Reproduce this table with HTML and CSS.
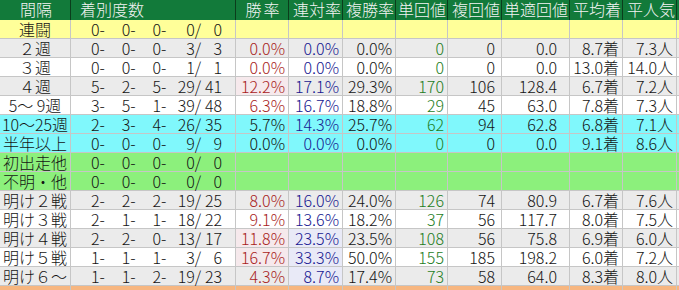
FILE: index.html
```html
<!DOCTYPE html>
<html lang="ja">
<head>
<meta charset="utf-8">
<title>間隔別成績</title>
<link rel="stylesheet" href="styles.css">
</head>
<body>
<div class="sheet">
  <div class="row head">
    <div class="cell name hl">間隔</div>
    <div class="cell rec hl">着別度数</div>
    <div class="cell win hc">勝率</div>
    <div class="cell hr">連対率</div>
    <div class="cell hr">複勝率</div>
    <div class="cell hr">単回値</div>
    <div class="cell hr">複回値</div>
    <div class="cell hr">単適回値</div>
    <div class="cell hr">平均着</div>
    <div class="cell hr">平人気</div>
    <div class="cell extra"></div>
  </div>

  <div class="row y">
    <div class="cell name">連闘</div>
    <div class="cell rec"><span>0-</span><span>0-</span><span>0-</span><span>0/</span><span>0</span></div>
    <div class="cell"></div><div class="cell"></div><div class="cell"></div><div class="cell"></div><div class="cell"></div><div class="cell"></div><div class="cell"></div><div class="cell"></div><div class="cell extra"></div>
  </div>

  <div class="row g">
    <div class="cell name">２週</div>
    <div class="cell rec"><span>0-</span><span>0-</span><span>0-</span><span>3/</span><span>3</span></div>
    <div class="cell num red">0.0%</div><div class="cell num blue">0.0%</div><div class="cell num">0.0%</div><div class="cell num green">0</div><div class="cell num p6">0</div><div class="cell num p12">0.0</div><div class="cell num">8.7着</div><div class="cell num">7.3人</div><div class="cell extra"></div>
  </div>

  <div class="row w">
    <div class="cell name">３週</div>
    <div class="cell rec"><span>0-</span><span>0-</span><span>0-</span><span>1/</span><span>1</span></div>
    <div class="cell num red">0.0%</div><div class="cell num blue">0.0%</div><div class="cell num">0.0%</div><div class="cell num green">0</div><div class="cell num p6">0</div><div class="cell num p12">0.0</div><div class="cell num">13.0着</div><div class="cell num">14.0人</div><div class="cell extra"></div>
  </div>

  <div class="row g">
    <div class="cell name">４週</div>
    <div class="cell rec"><span>5-</span><span>2-</span><span>5-</span><span>29/</span><span>41</span></div>
    <div class="cell num red hot">12.2%</div><div class="cell num blue">17.1%</div><div class="cell num">29.3%</div><div class="cell num green">170</div><div class="cell num p6">106</div><div class="cell num p12">128.4</div><div class="cell num">6.7着</div><div class="cell num">7.2人</div><div class="cell extra"></div>
  </div>

  <div class="row w">
    <div class="cell name">5～&nbsp;9週</div>
    <div class="cell rec"><span>3-</span><span>5-</span><span>1-</span><span>39/</span><span>48</span></div>
    <div class="cell num red">6.3%</div><div class="cell num blue">16.7%</div><div class="cell num">18.8%</div><div class="cell num green">29</div><div class="cell num p6">45</div><div class="cell num p12">63.0</div><div class="cell num">7.8着</div><div class="cell num">7.3人</div><div class="cell extra"></div>
  </div>

  <div class="row c">
    <div class="cell name">10～25週</div>
    <div class="cell rec"><span>2-</span><span>3-</span><span>4-</span><span>26/</span><span>35</span></div>
    <div class="cell num">5.7%</div><div class="cell num blue">14.3%</div><div class="cell num">25.7%</div><div class="cell num green">62</div><div class="cell num p6">94</div><div class="cell num p12">62.8</div><div class="cell num">6.8着</div><div class="cell num">7.1人</div><div class="cell extra"></div>
  </div>

  <div class="row c">
    <div class="cell name">半年以上</div>
    <div class="cell rec"><span>0-</span><span>0-</span><span>0-</span><span>9/</span><span>9</span></div>
    <div class="cell num">0.0%</div><div class="cell num blue">0.0%</div><div class="cell num">0.0%</div><div class="cell num green">0</div><div class="cell num p6">0</div><div class="cell num p12">0.0</div><div class="cell num">9.1着</div><div class="cell num">8.6人</div><div class="cell extra"></div>
  </div>

  <div class="row l">
    <div class="cell name">初出走他</div>
    <div class="cell rec"><span>0-</span><span>0-</span><span>0-</span><span>0/</span><span>0</span></div>
    <div class="cell"></div><div class="cell"></div><div class="cell"></div><div class="cell"></div><div class="cell"></div><div class="cell"></div><div class="cell"></div><div class="cell"></div><div class="cell extra"></div>
  </div>

  <div class="row l">
    <div class="cell name">不明・他</div>
    <div class="cell rec"><span>0-</span><span>0-</span><span>0-</span><span>0/</span><span>0</span></div>
    <div class="cell"></div><div class="cell"></div><div class="cell"></div><div class="cell"></div><div class="cell"></div><div class="cell"></div><div class="cell"></div><div class="cell"></div><div class="cell extra"></div>
  </div>

  <div class="row g">
    <div class="cell name">明け２戦</div>
    <div class="cell rec"><span>2-</span><span>2-</span><span>2-</span><span>19/</span><span>25</span></div>
    <div class="cell num red">8.0%</div><div class="cell num blue">16.0%</div><div class="cell num">24.0%</div><div class="cell num green">126</div><div class="cell num p6">74</div><div class="cell num p12">80.9</div><div class="cell num">6.7着</div><div class="cell num">7.6人</div><div class="cell extra"></div>
  </div>

  <div class="row w">
    <div class="cell name">明け３戦</div>
    <div class="cell rec"><span>2-</span><span>1-</span><span>1-</span><span>18/</span><span>22</span></div>
    <div class="cell num red">9.1%</div><div class="cell num blue">13.6%</div><div class="cell num">18.2%</div><div class="cell num green">37</div><div class="cell num p6">56</div><div class="cell num p12">117.7</div><div class="cell num">8.0着</div><div class="cell num">7.5人</div><div class="cell extra"></div>
  </div>

  <div class="row g">
    <div class="cell name">明け４戦</div>
    <div class="cell rec"><span>2-</span><span>2-</span><span>0-</span><span>13/</span><span>17</span></div>
    <div class="cell num red hot">11.8%</div><div class="cell num blue cool">23.5%</div><div class="cell num">23.5%</div><div class="cell num green">108</div><div class="cell num p6">56</div><div class="cell num p12">75.8</div><div class="cell num">6.9着</div><div class="cell num">6.0人</div><div class="cell extra"></div>
  </div>

  <div class="row w">
    <div class="cell name">明け５戦</div>
    <div class="cell rec"><span>1-</span><span>1-</span><span>1-</span><span>3/</span><span>6</span></div>
    <div class="cell num red hot">16.7%</div><div class="cell num blue cool">33.3%</div><div class="cell num">50.0%</div><div class="cell num green">155</div><div class="cell num p6">185</div><div class="cell num p12">198.2</div><div class="cell num">6.0着</div><div class="cell num">7.2人</div><div class="cell extra"></div>
  </div>

  <div class="row g">
    <div class="cell name">明け６～</div>
    <div class="cell rec"><span>1-</span><span>1-</span><span>2-</span><span>19/</span><span>23</span></div>
    <div class="cell num red">4.3%</div><div class="cell num blue cool">8.7%</div><div class="cell num">17.4%</div><div class="cell num green">73</div><div class="cell num p6">58</div><div class="cell num p12">64.0</div><div class="cell num">8.3着</div><div class="cell num">8.0人</div><div class="cell extra"></div>
  </div>

  <div class="row o">
    <div class="cell name"></div><div class="cell rec"></div>
    <div class="cell"></div><div class="cell"></div><div class="cell"></div><div class="cell"></div><div class="cell"></div><div class="cell"></div><div class="cell"></div><div class="cell"></div><div class="cell extra"></div>
  </div>
</div>
</body>
</html>
```

FILE: styles.css
```css
html, body {
  margin: 0;
  padding: 0;
  background: #ffffff;
  overflow: hidden;
}

.sheet {
  width: 679px;
  height: 290px;
  overflow: hidden;
  font-family: "Noto Sans CJK JP", "Noto Sans", sans-serif;
  font-size: 16px;
  font-weight: 300;
  color: #141414;
}

.row {
  display: grid;
  grid-template-columns: 71px 165px 53px 54px 53px 52px 54px 68px 53px 54px 2px;
  height: 19px;
  box-sizing: border-box;
  border-bottom: 1px solid #c6c6c6;
  line-height: 18px;
}

.cell {
  box-sizing: border-box;
  border-right: 1px solid #c6c6c6;
  white-space: nowrap;
}

.cell.extra {
  border-right: none;
}

.head {
  height: 20px;
  border-bottom: none;
  background: #127a3a;
  color: #f4f4f4;
  line-height: 19px;
}

.head .cell {
  border-right-color: #0b3d1c;
}

.hl { padding-left: 2px; }
.head .rec { padding-left: 9px; }
.hc { text-align: center; letter-spacing: 2px; padding-left: 3px; }
.hr { text-align: right; padding-right: 1px; }

.name { text-align: center; }

.rec {
  display: flex;
  padding-right: 13px;
}
.rec span { text-align: right; }
.rec span:nth-child(1) { width: 34px; }
.rec span:nth-child(2) { width: 31px; }
.rec span:nth-child(3) { width: 31px; }
.rec span:nth-child(4) { width: 35px; }
.rec span:nth-child(5) { width: 21px; }

.num { text-align: right; padding-right: 3px; }
.p6 { padding-right: 6px; }
.p12 { padding-right: 12px; }

.red { color: #a81c1c; }
.blue { color: #161690; }
.green { color: #1d7d1d; }

.hot { background: #f6e9ec; }
.cool { background: #e9eaf7; }

.y { background: #ffff99; }
.g { background: #ebebeb; }
.w { background: #ffffff; }
.c { background: #80f8fc; }
.l { background: #8cf07c; }
.o { background: #f7b680; }
```
